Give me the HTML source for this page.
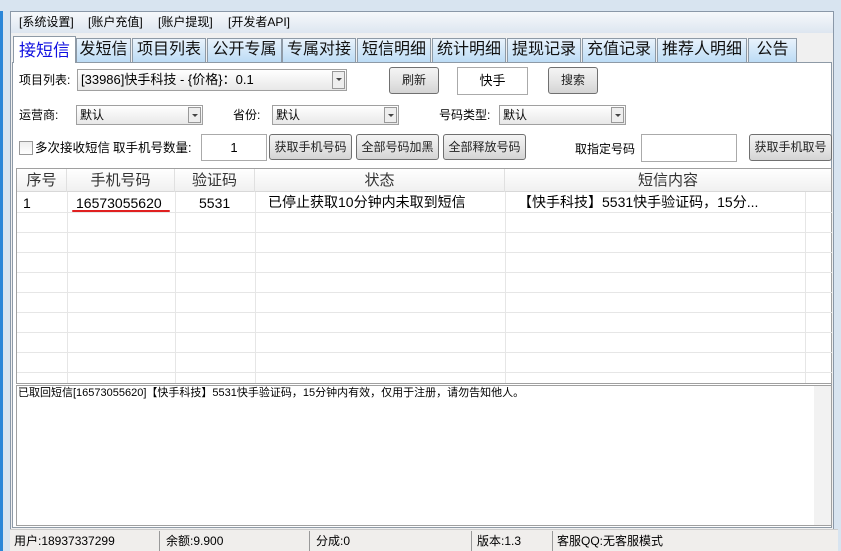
<!DOCTYPE html>
<html><head><meta charset="utf-8"><style>
*{margin:0;padding:0;box-sizing:border-box}
body{width:841px;height:551px;overflow:hidden;background:#f0f0f0;font-family:"Liberation Sans","Noto Sans CJK SC","WenQuanYi Zen Hei",sans-serif;font-size:12px;color:#000;position:relative}
.a{position:absolute}
.tab{position:absolute;top:38px;height:24px;border:1px solid #8e9aa6;border-bottom:none;background:linear-gradient(#e9f3fc,#bcdcf5);font-size:16px;line-height:22px;text-align:center;color:#111}
.btn{position:absolute;border:1px solid #707070;border-radius:3px;background:linear-gradient(#f4f4f4 0%,#e6e6e6 50%,#d4d4d4 100%);text-align:center;font-size:12px;color:#222}
.combo{position:absolute;height:20px;border:1px solid #a0a0a0;background:linear-gradient(#fff,#e8e8e8);font-size:12px;line-height:18px;padding-left:3px}
.combo i{position:absolute;right:1px;top:1px;width:13px;height:16px;border:1px solid #999;background:#eee}
.combo i:after{content:"";position:absolute;left:3px;top:6px;border:3px solid transparent;border-top:3px solid #444}
.lbl{position:absolute;font-size:12px;line-height:1;white-space:nowrap}
.hl{position:absolute;left:17px;width:815px;height:1px;background:#e6e6e6}
.vl{position:absolute;top:192px;height:191px;width:1px;background:#e6e6e6}
.hd{position:absolute;top:169px;height:23px;font-size:15px;line-height:23px;text-align:center;color:#333;border-right:1px solid #e0e0e0}
.st{position:absolute;top:531px;height:20px;line-height:20px;font-size:12px;border-right:1px solid #999;padding-left:3px}
</style></head><body>
<div class="a" style="left:0;top:0;width:3px;height:551px;background:#2a86d8"></div>
<div class="a" style="left:3px;top:0;width:7px;height:551px;background:#d8e4f0"></div>
<div class="a" style="left:834px;top:0;width:7px;height:551px;background:#d8e4f0"></div>
<div class="a" style="left:0;top:0;width:841px;height:11px;background:#d8e4f0"></div>
<div class="a" style="left:10px;top:11px;width:824px;height:22px;background:linear-gradient(#f6f8fb,#dde6f0);border-top:1px solid #8a98a8;border-left:1px solid #8a98a8;border-right:1px solid #8a98a8"></div>
<div class="lbl" style="left:19px;top:16px">[系统设置]</div>
<div class="lbl" style="left:88px;top:16px">[账户充值]</div>
<div class="lbl" style="left:158px;top:16px">[账户提现]</div>
<div class="lbl" style="left:228px;top:16px">[开发者API]</div>
<div class="a" style="left:10px;top:33px;width:824px;height:498px;background:#f0f0f0;border-left:1px solid #8a98a8;border-right:1px solid #8a98a8"></div>
<div class="a" style="left:12px;top:62px;width:820px;height:466px;background:#fff;border:1px solid #8e9aa6"></div>
<div class="tab" style="left:13px;top:36px;height:27px;width:63px;background:#fff;color:#1010e0;font-size:17px;line-height:27px">接短信</div>
<div class="tab" style="left:76px;width:55px">发短信</div>
<div class="tab" style="left:132px;width:74px">项目列表</div>
<div class="tab" style="left:207px;width:75px">公开专属</div>
<div class="tab" style="left:282px;width:74px">专属对接</div>
<div class="tab" style="left:357px;width:74px">短信明细</div>
<div class="tab" style="left:432px;width:74px">统计明细</div>
<div class="tab" style="left:507px;width:74px">提现记录</div>
<div class="tab" style="left:582px;width:74px">充值记录</div>
<div class="tab" style="left:657px;width:90px">推荐人明细</div>
<div class="tab" style="left:748px;width:49px">公告</div>

<div class="lbl" style="left:19px;top:74px">项目列表:</div>
<div class="combo" style="left:77px;top:69px;width:270px;height:22px;font-size:13px;line-height:20px">[33986]快手科技 - {价格}：0.1<i style="height:18px"></i></div>
<div class="btn" style="left:389px;top:67px;width:50px;height:27px;line-height:25px">刷新</div>
<div class="a" style="left:457px;top:67px;width:71px;height:28px;border:1px solid #aaa;text-align:center;line-height:26px;font-size:13px">快手</div>
<div class="btn" style="left:548px;top:67px;width:50px;height:27px;line-height:25px">搜索</div>

<div class="lbl" style="left:19px;top:109px">运营商:</div>
<div class="combo" style="left:76px;top:105px;width:127px">默认<i></i></div>
<div class="lbl" style="left:233px;top:109px">省份:</div>
<div class="combo" style="left:272px;top:105px;width:127px">默认<i></i></div>
<div class="lbl" style="left:439px;top:109px">号码类型:</div>
<div class="combo" style="left:499px;top:105px;width:127px">默认<i></i></div>

<div class="a" style="left:19px;top:141px;width:14px;height:14px;border:1px solid #999;background:linear-gradient(#eee,#fff)"></div>
<div class="lbl" style="left:35px;top:142px;font-size:12.5px">多次接收短信</div>
<div class="lbl" style="left:113px;top:142px;font-size:12.5px">取手机号数量:</div>
<div class="a" style="left:201px;top:134px;width:66px;height:27px;border:1px solid #aaa;text-align:center;line-height:25px;font-size:13px">1</div>
<div class="btn" style="left:269px;top:134px;width:83px;height:26px;line-height:24px">获取手机号码</div>
<div class="btn" style="left:356px;top:134px;width:83px;height:26px;line-height:24px">全部号码加黑</div>
<div class="btn" style="left:443px;top:134px;width:83px;height:26px;line-height:24px">全部释放号码</div>
<div class="lbl" style="left:575px;top:143px">取指定号码</div>
<div class="a" style="left:641px;top:134px;width:96px;height:28px;border:1px solid #aaa;background:#fff"></div>
<div class="btn" style="left:749px;top:134px;width:83px;height:27px;line-height:25px">获取手机取号</div>

<div class="a" style="left:16px;top:168px;width:816px;height:216px;border:1px solid #a0a0a0;background:#fff"></div>
<div class="a" style="left:17px;top:169px;width:814px;height:23px;background:linear-gradient(#fff,#f0f0f0);border-bottom:1px solid #d8d8d8"></div>
<div class="hd" style="left:17px;width:50px">序号</div>
<div class="hd" style="left:67px;width:108px">手机号码</div>
<div class="hd" style="left:175px;width:80px">验证码</div>
<div class="hd" style="left:255px;width:250px">状态</div>
<div class="hd" style="left:505px;width:326px;border:none">短信内容</div>
<div class="hl" style="top:212px"></div><div class="hl" style="top:232px"></div><div class="hl" style="top:252px"></div><div class="hl" style="top:272px"></div><div class="hl" style="top:292px"></div><div class="hl" style="top:312px"></div><div class="hl" style="top:332px"></div><div class="hl" style="top:352px"></div><div class="hl" style="top:372px"></div>
<div class="vl" style="left:67px"></div><div class="vl" style="left:175px"></div><div class="vl" style="left:255px"></div><div class="vl" style="left:505px"></div><div class="vl" style="left:805px"></div>
<div class="lbl" style="left:23px;top:196px;font-size:14px">1</div>
<div class="lbl" style="left:76px;top:196px;font-size:14px">16573055620</div>
<div class="a" style="left:72px;top:210px;width:98px;height:2px;background:#e02020;border-radius:1px"></div>
<div class="lbl" style="left:199px;top:196px;font-size:14px">5531</div>
<div class="lbl" style="left:268px;top:195px;font-size:14px">已停止获取10分钟内未取到短信</div>
<div class="lbl" style="left:518px;top:195px;font-size:14px">【快手科技】5531快手验证码，15分...</div>

<div class="a" style="left:16px;top:385px;width:816px;height:141px;border:1px solid #a0a0a0;background:#fff"></div>
<div class="a" style="left:814px;top:386px;width:17px;height:139px;background:#f2f2f2"></div>
<div class="lbl" style="left:18px;top:388px;font-size:11px">已取回短信[16573055620]【快手科技】5531快手验证码，15分钟内有效，仅用于注册，请勿告知他人。</div>

<div class="a" style="left:10px;top:529px;width:828px;height:22px;background:#f0eeec;border-top:1px solid #ccc"></div>
<div class="st" style="left:11px;width:149px">用户:18937337299</div>
<div class="st" style="left:163px;width:147px">余额:9.900</div>
<div class="st" style="left:313px;width:159px">分成:0</div>
<div class="st" style="left:474px;width:79px">版本:1.3</div>
<div class="st" style="left:554px;width:200px;border:none">客服QQ:无客服模式</div>
</body></html>
